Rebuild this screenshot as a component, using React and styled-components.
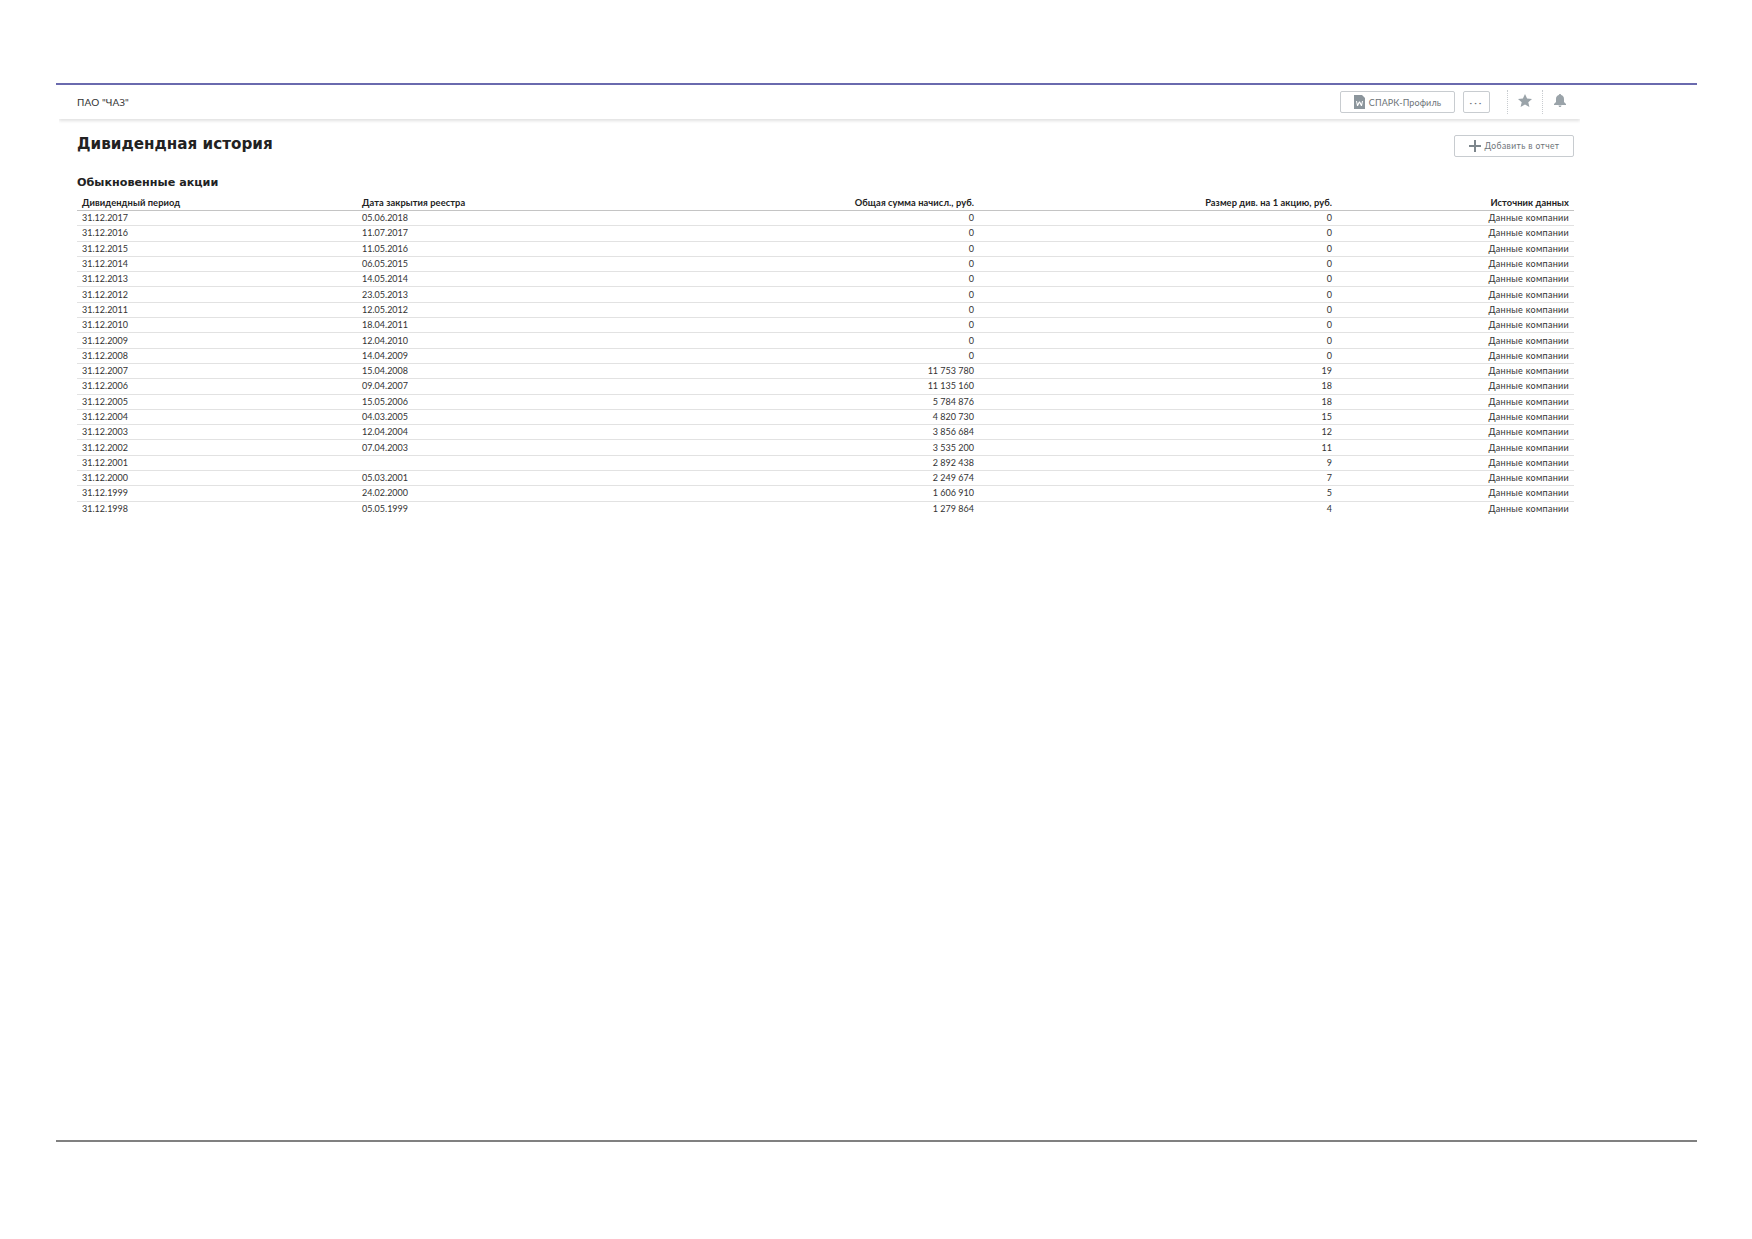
import React from 'react';
import styled, { createGlobalStyle } from 'styled-components';

const GlobalStyle = createGlobalStyle`
  body {
    margin: 0;
    background: #fff;
    font-family: Lato, "Open Sans", sans-serif;
    color: #333;
  }
`;

const Page = styled.div`
  width: 1752px;
  height: 1239px;
  padding: 83px 55px 0 56px;
  box-sizing: border-box;
  overflow: hidden;
`;

const Frame = styled.div`
  height: 1059px;
  box-sizing: border-box;
  border-top: 2px solid #6a6aae;
  border-bottom: 2px solid #808080;
`;

const Content = styled.div`
  width: 1521px;
  margin-left: 3px;
`;

const Header = styled.header`
  display: flex;
  align-items: center;
  height: 34px;
  padding: 0 0 0 18px;
  box-sizing: border-box;
  box-shadow: 0 2px 3px rgba(0, 0, 0, 0.12);
  clip-path: inset(0 0 -8px 0);
`;

const CompanyName = styled.div`
  flex: 1;
  font-size: 10px;
  color: #333;
  letter-spacing: 0.1px;
`;

const OutlineButton = styled.button`
  display: flex;
  align-items: center;
  justify-content: center;
  gap: 4px;
  height: 22px;
  padding: 0;
  box-sizing: border-box;
  background: #fff;
  border: 1px solid #c8ccd0;
  border-radius: 2px;
  font-family: inherit;
  font-size: 9px;
  color: #6d7378;
  width: ${p => p.$width}px;
`;

const MoreButton = styled(OutlineButton)`
  margin-left: 8px;
  letter-spacing: 2px;
  font-size: 10px;
`;

const ProfileButton = styled(OutlineButton)`
  letter-spacing: 0.1px;
`;

const IconCell = styled.div`
  display: flex;
  align-items: center;
  justify-content: center;
  width: 35px;
  height: 24px;
  padding-bottom: 3px;
  margin-left: ${p => p.$offset || 0}px;
  border-left: 1px dotted #c8ccd0;
  box-sizing: border-box;
`;

const HeaderIcons = styled.div`
  display: flex;
  margin-right: 3px;
`;

const TitleRow = styled.div`
  display: flex;
  justify-content: space-between;
  align-items: flex-start;
  padding: 15px 6px 0 18px;
`;

const Title = styled.h1`
  margin: 0;
  font-family: "DejaVu Sans", sans-serif;
  font-size: 15.200px;
  line-height: 20px;
  font-weight: 700;
  color: #222;
`;

const AddButton = styled(OutlineButton)`
  margin-top: 1px;
  font-size: 8.500px;
  letter-spacing: 0.4px;
`;

const SectionTitle = styled.h2`
  margin: 18px 0 0 18px;
  font-family: "DejaVu Sans", sans-serif;
  font-size: 11.200px;
  line-height: 16px;
  font-weight: 700;
  color: #222;
`;

const TableWrap = styled.div`
  margin: 4px 5px 0 18px;
`;

const Table = styled.table`
  width: 1497px;
  table-layout: fixed;
  border-collapse: collapse;
  font-size: 9px;
`;

const Th = styled.th`
  height: 15px;
  padding: 0 5px;
  font-size: 9.300px;
  font-weight: 700;
  letter-spacing: 0.08px;
  color: #222;
  text-align: ${p => (p.$right ? 'right' : 'left')};
  border-bottom: 1px solid #c4c4c4;
`;

const Td = styled.td`
  height: 14.300px;
  padding: 0 5px;
  line-height: 14px;
  color: #333;
  text-align: ${p => (p.$right ? 'right' : 'left')};
  border-bottom: 1px solid #e2e2e2;
`;

const SourceCell = styled(Td)`
  letter-spacing: 0.3px;
`;

const Tr = styled.tr`
  &:last-child td {
    border-bottom: none;
  }
`;

const rows = [
  ['31.12.2017', '05.06.2018', '0', '0'],
  ['31.12.2016', '11.07.2017', '0', '0'],
  ['31.12.2015', '11.05.2016', '0', '0'],
  ['31.12.2014', '06.05.2015', '0', '0'],
  ['31.12.2013', '14.05.2014', '0', '0'],
  ['31.12.2012', '23.05.2013', '0', '0'],
  ['31.12.2011', '12.05.2012', '0', '0'],
  ['31.12.2010', '18.04.2011', '0', '0'],
  ['31.12.2009', '12.04.2010', '0', '0'],
  ['31.12.2008', '14.04.2009', '0', '0'],
  ['31.12.2007', '15.04.2008', '11 753 780', '19'],
  ['31.12.2006', '09.04.2007', '11 135 160', '18'],
  ['31.12.2005', '15.05.2006', '5 784 876', '18'],
  ['31.12.2004', '04.03.2005', '4 820 730', '15'],
  ['31.12.2003', '12.04.2004', '3 856 684', '12'],
  ['31.12.2002', '07.04.2003', '3 535 200', '11'],
  ['31.12.2001', '', '2 892 438', '9'],
  ['31.12.2000', '05.03.2001', '2 249 674', '7'],
  ['31.12.1999', '24.02.2000', '1 606 910', '5'],
  ['31.12.1998', '05.05.1999', '1 279 864', '4'],
];

const WordIcon = () => (
  <svg width="11" height="14" viewBox="0 0 11 14">
    <path d="M0 0h8l3 3v11H0z" fill="#8b959c" />
    <path d="M2 6l1 5h1l1.500-3 1.500 3h1l1-5H8l-.6 3L6 6.500h-1L3.600 9 3 6z" fill="#fff" />
  </svg>
);

const StarIcon = () => (
  <svg width="14" height="13" viewBox="0 0 14 13">
    <path d="M7 0l2.100 4.500 4.900.5-3.700 3.200 1.100 4.800L7 10.500 2.600 13l1.100-4.800L0 5l4.900-.5z" fill="#9aa3a9" />
  </svg>
);

const BellIcon = () => (
  <svg width="12" height="13" viewBox="0 0 12 13">
    <path d="M6 0c.7 0 1.100.5 1.100 1.100C9 1.600 10 3.200 10 5v3l2 2v1H0v-1l2-2V5c0-1.800 1-3.400 2.900-3.900C4.900.5 5.300 0 6 0zM4.500 11.500h3C7.500 12.400 6.800 13 6 13s-1.500-.6-1.500-1.500z" fill="#9aa3a9" />
  </svg>
);

const PlusIcon = () => (
  <svg width="12" height="12" viewBox="0 0 12 12">
    <path d="M5 0h2v5h5v2H7v5H5V7H0V5h5z" fill="#7d868c" />
  </svg>
);

const App = () => (
  <>
    <GlobalStyle />
    <Page>
      <Frame>
        <Content>
          <Header>
            <CompanyName>ПАО "ЧАЗ"</CompanyName>
            <ProfileButton $width={115}>
              <WordIcon />
              СПАРК-Профиль
            </ProfileButton>
            <MoreButton $width={27}>···</MoreButton>
            <HeaderIcons>
              <IconCell $offset={17}><StarIcon /></IconCell>
              <IconCell><BellIcon /></IconCell>
            </HeaderIcons>
          </Header>
          <TitleRow>
            <Title>Дивидендная история</Title>
            <AddButton $width={120}>
              <PlusIcon />
              Добавить в отчет
            </AddButton>
          </TitleRow>
          <SectionTitle>Обыкновенные акции</SectionTitle>
          <TableWrap>
            <Table>
              <colgroup>
                <col width="280" />
                <col width="280" />
                <col width="342" />
                <col width="358" />
                <col width="237" />
              </colgroup>
              <thead>
                <tr>
                  <Th>Дивидендный период</Th>
                  <Th>Дата закрытия реестра</Th>
                  <Th $right>Общая сумма начисл., руб.</Th>
                  <Th $right>Размер див. на 1 акцию, руб.</Th>
                  <Th $right>Источник данных</Th>
                </tr>
              </thead>
              <tbody>
                {rows.map(row => (
                  <Tr key={row[0]}>
                    <Td>{row[0]}</Td>
                    <Td>{row[1]}</Td>
                    <Td $right>{row[2]}</Td>
                    <Td $right>{row[3]}</Td>
                    <SourceCell $right>Данные компании</SourceCell>
                  </Tr>
                ))}
              </tbody>
            </Table>
          </TableWrap>
        </Content>
      </Frame>
    </Page>
  </>
);

export default App;
